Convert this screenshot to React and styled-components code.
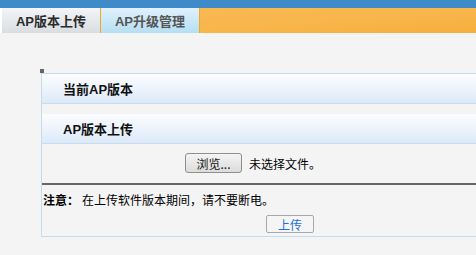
import React from 'react';
import styled, {createGlobalStyle} from 'styled-components';

const Global = createGlobalStyle`
  html, body {
    margin: 0;
    padding: 0;
    background: #f4f4f4;
    overflow: hidden;
    font-family: "Liberation Sans", "Noto Sans CJK SC", sans-serif;
    font-size: 12px;
    color: #000;
  }
`;

const TopBar = styled.div`
  height: 8px;
  background: #3f8bca;
`;

const TabBar = styled.div`
  display: flex;
  height: 25px;
  background: linear-gradient(176deg, #f9bb55 0%, #f8b64c 60%, #f7ae3c 100%);
`;

const Tab = styled.div`
  width: 100px;
  height: 25px;
  box-sizing: border-box;
  display: flex;
  align-items: center;
  justify-content: center;
  font-size: 13px;
  font-weight: bold;
  color: ${p => (p.active ? '#2b2b2b' : '#555')};
  background: ${p => (p.active
    ? 'linear-gradient(#f3f5f7, #d9dde1)'
    : 'linear-gradient(#dff2fc, #b6def2)')};
  border-left: ${p => (p.active ? '2px solid #fff' : '1px solid #f5a623')};
  border-right: ${p => (p.active ? 'none' : '1px solid #f5a623')};
`;

const Content = styled.div`
  padding: 36px 0 0 40px;
`;

const Marker = styled.div`
  width: 4px;
  height: 4px;
  background: #666;
`;

const Panel = styled.div`
  margin-left: 1px;
  border: 1px solid #c5dbef;
  border-right: none;
  box-sizing: border-box;
  background: #f4f4f4;
`;

const Header = styled.div`
  height: 29px;
  display: flex;
  align-items: center;
  padding-left: 21px;
  font-size: 13px;
  font-weight: bold;
  color: #111;
  background: linear-gradient(#fcfdff, #dde9f8);
  border-bottom: 1px solid #c5dbef;
`;

const Spacer = styled.div`
  height: 9px;
  border-bottom: 1px solid #f4f4f4;
`;

const FileRow = styled.div`
  display: flex;
  align-items: center;
  height: 38px;
  gap: 7px;
  padding-left: 143px;
`;

const BrowseButton = styled.button`
  width: 57px;
  height: 20px;
  padding: 0;
  font-family: "Noto Sans CJK SC", sans-serif;
  font-size: 12px;
  color: #111;
  border: 1px solid #8f8f8f;
  border-radius: 3px;
  background: linear-gradient(#f4f4f4, #dcdcdc);
`;

const Divider = styled.div`
  height: 2px;
  background: #676767;
  margin-top: 1px;
`;

const Note = styled.div`
  display: flex;
  align-items: center;
  height: 28px;
  padding-left: 1px;
`;

const NoteLabel = styled.span`
  font-weight: bold;
  margin-right: 3px;
`;

const Actions = styled.div`
  display: flex;
  padding: 2px 0 3px 224px;
`;

const UploadButton = styled.button`
  width: 48px;
  height: 18px;
  padding: 0;
  font-family: "Noto Sans CJK SC", sans-serif;
  font-size: 12px;
  color: #1c6ee0;
  border: 1px solid #a8a8a8;
  border-radius: 2px;
  background: #f5f5f5;
`;

export default function App() {
  return (
    <>
      <Global/>
      <TopBar/>
      <TabBar>
        <Tab active>AP版本上传</Tab>
        <Tab>AP升级管理</Tab>
      </TabBar>
      <Content>
        <Marker/>
        <Panel>
          <Header>当前AP版本</Header>
          <Spacer/>
          <Header>AP版本上传</Header>
          <FileRow>
            <BrowseButton>浏览...</BrowseButton>
            <span>未选择文件。</span>
          </FileRow>
          <Divider/>
          <Note>
            <NoteLabel>注意：</NoteLabel>
            在上传软件版本期间，请不要断电。
          </Note>
          <Actions>
            <UploadButton>上传</UploadButton>
          </Actions>
        </Panel>
      </Content>
    </>
  );
}
